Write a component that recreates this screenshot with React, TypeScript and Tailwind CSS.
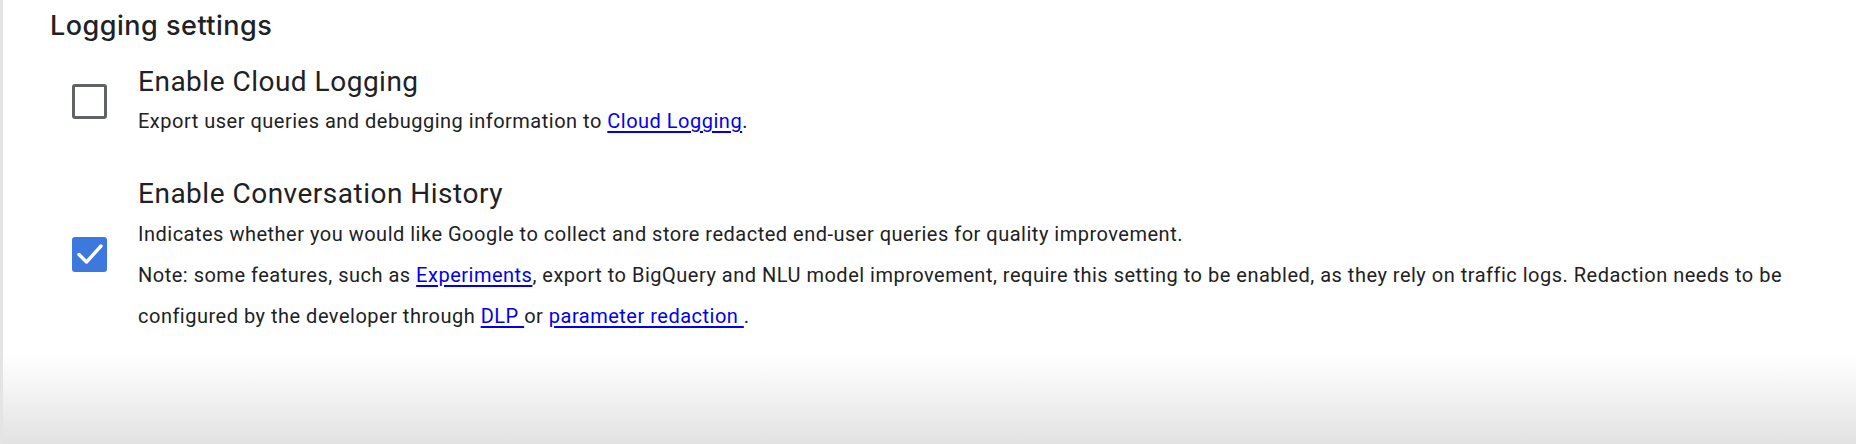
const Checkbox = ({ checked }: { checked: boolean }) => {
    if (checked) {
        return (
            <div className="h-[35px] w-[35px] shrink-0 rounded-[3px] bg-[#3c78de]">
                <svg viewBox="0 0 35 35" className="h-[35px] w-[35px]">
                    <polyline points="7,17.5 14.5,25 29,9" fill="none" stroke="white" strokeWidth="3.4" strokeLinecap="round" strokeLinejoin="round" />
                </svg>
            </div>
        );
    }
    return <div className="h-[35px] w-[35px] shrink-0 rounded-[3px] border-[3.5px] border-[#5f6368] bg-white" />;
};

const Link = ({ children }: { children: React.ReactNode }) => (
    <a href="#" className="text-[#0000ee] underline underline-offset-[3px]">{children}</a>
);

export default function App() {
    return (
        <div className="h-[444px] w-full border-l-[3px] border-[#e4e4e4] bg-[linear-gradient(to_bottom,#ffffff_80%,#e2e2e2)] pl-[47px] pt-[7px] font-['Roboto',sans-serif] text-[#202124]">
            <h2 className="font-['Inter',sans-serif] text-[27px] leading-[38px] font-medium tracking-[0.5px] text-[#202124]">
                Logging settings
            </h2>

            <div className="mt-[21px] flex items-center pl-[22px]">
                <div className="pt-[2px]">
                    <Checkbox checked={false} />
                </div>
                <div className="pl-[31px]">
                    <div className="text-[28px] leading-[32px] tracking-[0.5px] text-[#202124]">Enable Cloud Logging</div>
                    <div className="mt-[9px] text-[20px] leading-[28px] tracking-[0.5px] text-[#202124]">
                        Export user queries and debugging information to <Link>Cloud Logging</Link>.
                    </div>
                </div>
            </div>

            <div className="mt-[43px] flex items-center pl-[22px]">
                <div className="pb-[6px]">
                    <Checkbox checked={true} />
                </div>
                <div className="pl-[31px]">
                    <div className="text-[28px] leading-[32px] tracking-[0.5px] text-[#202124]">Enable Conversation History</div>
                    <div className="mt-[4px] text-[20px] leading-[41px] tracking-[0.5px] text-[#202124]">
                        <div>Indicates whether you would like Google to collect and store redacted end-user queries for quality improvement.</div>
                        <div>
                            Note: some features, such as <Link>Experiments</Link>, export to BigQuery and NLU model improvement, require this setting to be enabled, as they rely on traffic logs. Redaction needs to be configured by the developer through <Link>DLP </Link> or <Link>parameter redaction </Link>.
                        </div>
                    </div>
                </div>
            </div>
        </div>
    );
}
